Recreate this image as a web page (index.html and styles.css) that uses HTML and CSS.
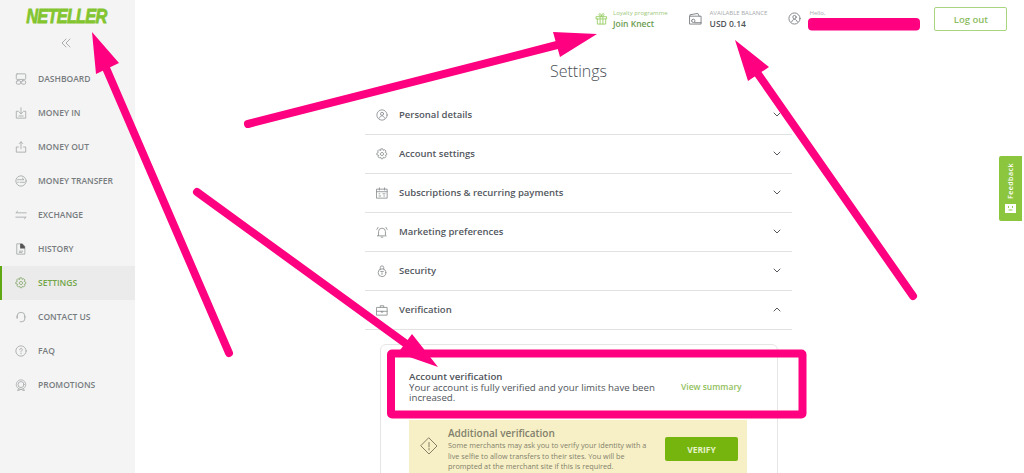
FILE: index.html
```html
<!DOCTYPE html>
<html lang="en">
<head>
  <meta charset="UTF-8">
  <title>Settings</title>
  <link rel="stylesheet" href="styles.css">
</head>
<body>
  <div class="page">

    <!-- Sidebar -->
    <aside class="sidebar">
      <div class="logo"><span class="logo-text">NETELLER</span></div>
      <div class="collapse">
        <svg width="10" height="10" viewBox="0 0 10 10"><path d="M5 1 1 5l4 4M9 1 5 5l4 4"/></svg>
      </div>
      <nav class="nav">
        <a class="nav-item"><svg class="nav-icon" viewBox="0 0 14 14"><rect x="1.500" y="1" width="11" height="6.500" rx="1"/><rect x="1.500" y="9" width="5" height="4" rx="1.500"/><rect x="7.500" y="9" width="5" height="4" rx="1.500"/></svg>DASHBOARD</a>
        <a class="nav-item"><svg class="nav-icon" viewBox="0 0 14 14"><path d="M4 5H1.500v8h11V5H10M7 1v7M5 6l2 2 2-2M4.500 10.500h5"/></svg>MONEY IN</a>
        <a class="nav-item"><svg class="nav-icon" viewBox="0 0 14 14"><path d="M4 7H1.500v6h11V7H10M7 9V1M5 3l2-2 2 2"/></svg>MONEY OUT</a>
        <a class="nav-item"><svg class="nav-icon" viewBox="0 0 14 14"><circle cx="7" cy="7" r="6"/><path d="M3 5.500h7.500L8.500 3.500M11 8.500H6M3 8.500h1"/></svg>MONEY TRANSFER</a>
        <a class="nav-item"><svg class="nav-icon" viewBox="0 0 14 14"><path d="M13 4.500H1l2-2M1 9.500h12l-2 2"/></svg>EXCHANGE</a>
        <a class="nav-item"><svg class="nav-icon" viewBox="0 0 14 14"><path d="M2.500 1h6l3 3v9h-9zM5 9.500h4M5 11h3"/><path class="fill" d="M6 1h2.500l3 3v2.500H6z"/></svg>HISTORY</a>
        <a class="nav-item active"><svg class="nav-icon" viewBox="0 0 14 14"><path d="M6 1h2l.5 1.800 1.700-.8 1.400 1.400-.8 1.700 1.700.9v2l-1.700.5.8 1.700-1.400 1.400-1.700-.8-.5 1.700H6l-.5-1.700-1.700.8-1.400-1.400.8-1.700L1 8V6l1.700-.9-.8-1.700L3.300 2l1.700.8z"/><path d="M5 6.500a2.200 2.200 0 0 1 4 0M9 7.500a2.200 2.200 0 0 1-4 0"/></svg>SETTINGS</a>
        <a class="nav-item"><svg class="nav-icon" viewBox="0 0 14 14"><path d="M2.500 8V6a4.500 4.500 0 0 1 9 0v2M2.500 5.500v3M11.500 6v3a3.500 3.500 0 0 1-3.500 3.500H6"/></svg>CONTACT US</a>
        <a class="nav-item"><svg class="nav-icon" viewBox="0 0 14 14"><circle cx="7" cy="7" r="6"/><path d="M5.500 5.500a1.500 1.500 0 1 1 2.200 1.300C7 7.200 7 7.500 7 8.200M7 9.800v.4"/></svg>FAQ</a>
        <a class="nav-item"><svg class="nav-icon" viewBox="0 0 14 14"><path d="M4 11.500l-1 2 2-.5 2-1 2 1 2 .5-1-2"/><circle cx="7" cy="6.500" r="3.500"/><circle class="dots" cx="7" cy="6.500" r="5.500"/></svg>PROMOTIONS</a>
      </nav>
    </aside>

    <div class="main">

      <!-- Top bar -->
      <header class="topbar">
        <div class="top-item loyalty">
          <svg class="top-icon green" viewBox="0 0 14 14"><path d="M1.500 5h11v2.500h-11zM2.500 7.500V13h9V7.500M5.500 5v8M8.500 5v8M7 4.500C4.500 4.500 4 3 4.500 2S6.500 1.500 7 4.500c.5-3 2-3.500 2.500-2.500S9.500 4.500 7 4.500z"/></svg>
          <div>
            <div class="top-label green-text">Loyalty programme</div>
            <div class="top-value green-dark">Join Knect</div>
          </div>
        </div>
        <div class="top-item">
          <svg class="top-icon" viewBox="0 0 14 14"><path d="M1 4.500h12V13H1zM1 4.500V3l8.500-1.500L11 4.500M2.800 9.500a1.800 1.800 0 1 0 3.600 0 1.800 1.800 0 1 0-3.600 0M6 11.500h7"/></svg>
          <div>
            <div class="top-label">AVAILABLE BALANCE</div>
            <div class="top-value">USD 0.14</div>
          </div>
        </div>
        <div class="top-item hello">
          <svg class="top-icon" viewBox="0 0 14 14"><circle cx="7" cy="7" r="6"/><circle cx="7" cy="5.500" r="1.800"/><path d="M4 10.500c.5-1.800 1.800-2.500 3-2.500s2.500.7 3 2.500"/></svg>
          <div class="top-label">Hello,</div>
        </div>
        <button class="logout">Log out</button>
      </header>

      <h1 class="page-title">Settings</h1>

      <!-- Settings list -->
      <section class="settings">
        <div class="row">
          <svg class="row-icon" viewBox="0 0 14 14"><circle cx="7" cy="7" r="6"/><circle cx="7" cy="5.600" r="1.800"/><path d="M4 10.500c.5-1.800 1.800-2.500 3-2.500s2.500.7 3 2.500"/></svg>
          <span class="row-text">Personal details</span>
          <svg class="chev" viewBox="0 0 8 5"><path d="M1 1l3 3 3-3"/></svg>
        </div>
        <div class="row">
          <svg class="row-icon" viewBox="0 0 14 14"><path d="M6 1h2l.5 1.800 1.700-.8 1.400 1.400-.8 1.700 1.700.9v2l-1.700.5.8 1.700-1.400 1.400-1.700-.8-.5 1.700H6l-.5-1.700-1.700.8-1.400-1.400.8-1.700L1 8V6l1.700-.9-.8-1.700L3.300 2l1.700.8z"/><path d="M5 6.500a2.200 2.200 0 0 1 4 0M9 7.500a2.200 2.200 0 0 1-4 0"/></svg>
          <span class="row-text">Account settings</span>
          <svg class="chev" viewBox="0 0 8 5"><path d="M1 1l3 3 3-3"/></svg>
        </div>
        <div class="row">
          <svg class="row-icon" viewBox="0 0 14 14"><path d="M1 2.500h12v10.500H1zM1 5.500h12M4 1v2.500M10 1v2.500M3.500 10.500h2M8 8h2.500M3.500 8h1M9 10.500h1"/></svg>
          <span class="row-text">Subscriptions &amp; recurring payments</span>
          <svg class="chev" viewBox="0 0 8 5"><path d="M1 1l3 3 3-3"/></svg>
        </div>
        <div class="row">
          <svg class="row-icon" viewBox="0 0 14 14"><path d="M3 10.500V6.500a4 4 0 0 1 8 0v4l1 1H2zM6 13h2M1 4l1.500-2.500M13 4l-1.500-2.500"/></svg>
          <span class="row-text">Marketing preferences</span>
          <svg class="chev" viewBox="0 0 8 5"><path d="M1 1l3 3 3-3"/></svg>
        </div>
        <div class="row">
          <svg class="row-icon" viewBox="0 0 14 14"><circle cx="7" cy="9" r="4.500"/><path d="M5 5V3a2 2 0 0 1 4 0v2M5.500 7.500h3M7 9v2"/></svg>
          <span class="row-text">Security</span>
          <svg class="chev" viewBox="0 0 8 5"><path d="M1 1l3 3 3-3"/></svg>
        </div>
        <div class="row">
          <svg class="row-icon" viewBox="0 0 14 14"><path d="M1 4h12v9H1zM5 4V2h4v2M1 8.500h12M6 8.500v1h2v-1"/></svg>
          <span class="row-text">Verification</span>
          <svg class="chev" viewBox="0 0 8 5"><path d="M1 4l3-3 3 3"/></svg>
        </div>

        <!-- Verification card -->
        <div class="card">
          <div class="verified">
            <div class="verified-text">
              <div class="verified-title">Account verification</div>
              <div class="verified-desc">Your account is fully verified and your limits have been increased.</div>
            </div>
            <a class="summary">View summary</a>
          </div>
          <div class="notice">
            <svg class="notice-icon" viewBox="0 0 18 18"><path d="M9 1l8 8-8 8-8-8zM9 5.500v4.500M9 11.500v1.500"/></svg>
            <div class="notice-body">
              <div class="notice-title">Additional verification</div>
              <div class="notice-text">Some merchants may ask you to verify your identity with a live selfie to allow transfers to their sites. You will be prompted at the merchant site if this is required.</div>
            </div>
            <button class="verify">VERIFY</button>
          </div>
        </div>
      </section>
    </div>
  </div>

  <!-- Feedback tab -->
  <div class="feedback">
    <span class="feedback-text">Feedback</span>
    <svg class="feedback-icon" viewBox="0 0 11 9"><path d="M0 0h11v9H0z"/><path class="mouth" d="M3.500 2.500v1M7.500 2.500v1M4 6h3"/></svg>
  </div>

  <!-- Annotations drawn over the screenshot -->
  <svg class="marks" width="1024" height="473" viewBox="0 0 1024 473">
    <rect class="mark-box" x="391" y="353.500" width="411.500" height="61" rx="1"/>
    <path class="mark-line" d="M229 353 106 68M248 124 557 45M913 296 758 74M197 192 405 343"/>
    <path class="mark-head" d="M92 32 96 74 119 63zM597 34 553 32 560 57zM735 40 748 81 769 67zM438 367 412 334 398 353z"/>
    <rect class="mark-pill" x="808" y="18" width="112" height="12.500" rx="4"/>
  </svg>
</body>
</html>
```

FILE: styles.css
```css
/* Reset */
* {
  margin: 0;
  padding: 0;
  box-sizing: border-box;
}

html, body {
  height: 100%;
  overflow: hidden;
  background: #fff;
  font-family: 'Open Sans', sans-serif;
  color: #4a4f55;
}

svg {
  fill: none;
  stroke-linecap: round;
  stroke-linejoin: round;
}

.page {
  display: flex;
  height: 473px;
}

/* Sidebar */
.sidebar {
  width: 135px;
  flex: none;
  background: #f4f4f4;
}

.logo {
  display: flex;
  justify-content: center;
  height: 30px;
  padding: 3px 2px 0 0;
}

.logo-text {
  display: block;
  font-family: 'Liberation Sans', sans-serif;
  font-size: 21px;
  line-height: 25px;
  font-weight: 700;
  font-style: italic;
  letter-spacing: -1px;
  color: #83c52f;
  -webkit-text-stroke: 0.8px #83c52f;
  transform: scaleX(0.78);
}

.collapse {
  display: flex;
  justify-content: center;
  height: 32px;
  padding: 8px 3px 0 0;
}

.collapse svg {
  stroke: #a9adb0;
  stroke-width: 1;
}

.nav-item {
  display: flex;
  align-items: center;
  gap: 11px;
  height: 34px;
  padding: 0 0 1px 15px;
  font-size: 8.5px;
  font-weight: 600;
  color: #777c80;
}

.nav-icon {
  width: 12px;
  height: 12px;
  flex: none;
  stroke: #a5a8aa;
  stroke-width: 1;
}

.nav-icon .fill {
  fill: #555;
  stroke: none;
}

.nav-icon .dots {
  stroke-dasharray: 1.500 1;
}

.nav-item.active {
  background: #ebebeb;
  color: #72a548;
  box-shadow: inset 2px 0 0 #5fa814;
}

.nav-item.active .nav-icon {
  stroke: #86a86c;
}

/* Main column */
.main {
  flex: 1;
  min-width: 0;
}

.topbar {
  display: flex;
  align-items: flex-start;
  gap: 21px;
  height: 58px;
  padding: 7px 17px 0 460px;
}

.top-item {
  display: flex;
  flex: none;
  align-items: flex-start;
  gap: 8px;
  padding-top: 2px;
  white-space: nowrap;
}

.top-item.loyalty {
  gap: 5px;
}

.top-item.hello {
  width: 125px;
}

.top-icon {
  width: 13px;
  height: 13px;
  flex: none;
  margin-top: 3px;
  stroke: #7d8184;
  stroke-width: 1;
}

.top-icon.green {
  stroke: #9ccf6a;
}

.top-label {
  font-size: 6px;
  line-height: 8px;
  color: #a7aaad;
}

.green-text {
  color: #9cc77a;
}

.top-value {
  font-size: 8.5px;
  line-height: 13px;
  font-weight: 600;
  color: #50555a;
}

.green-dark {
  color: #6b9c50;
}

.logout {
  flex: none;
  width: 73px;
  height: 24px;
  margin-left: auto;
  border: 1px solid #a8d680;
  border-radius: 2px;
  background: #fff;
  font-family: inherit;
  font-size: 9.5px;
  font-weight: 600;
  color: #8dbb60;
}

.page-title {
  height: 38px;
  margin-right: 2px;
  text-align: center;
  font-size: 16px;
  line-height: 26px;
  font-weight: 300;
  color: #4a4f55;
}

/* Settings list */
.settings {
  width: 427px;
  margin-left: 230px;
}

.row {
  display: flex;
  align-items: center;
  height: 39px;
  padding: 0 11px 1px 11px;
  border-bottom: 1px solid #e2e2e2;
}

.row-icon {
  width: 12px;
  height: 12px;
  flex: none;
  stroke: #8a8d90;
  stroke-width: 1;
}

.row-text {
  flex: 1;
  margin-left: 11px;
  font-size: 9.5px;
  font-weight: 600;
  color: #53585e;
}

.chev {
  width: 8px;
  height: 5px;
  stroke: #55595d;
  stroke-width: 1;
}

/* Verification card */
.card {
  width: 398px;
  height: 140px;
  margin: 14px 0 0 15px;
  padding-top: 18px;
  border: 1px solid #e6e6e6;
  border-radius: 6px;
}

.verified {
  display: flex;
  align-items: center;
  height: 46px;
  margin-bottom: 11px;
  padding-left: 28px;
}

.verified-text {
  flex: none;
  width: 262px;
  font-size: 9.7px;
  color: #4f545a;
}

.verified-title {
  font-weight: 600;
  line-height: 13px;
}

.verified-desc {
  line-height: 10px;
}

.summary {
  margin-left: 10px;
  font-size: 8.5px;
  font-weight: 600;
  color: #92c060;
}

.notice {
  display: flex;
  align-items: flex-start;
  width: 338px;
  height: 60px;
  margin-left: 28px;
  padding: 6px 0 0 11px;
  background: #f7f0c6;
}

.notice-icon {
  width: 18px;
  height: 18px;
  flex: none;
  margin-top: 11px;
  stroke: #77705a;
  stroke-width: 0.9;
}

.notice-body {
  flex: none;
  width: 205px;
  margin-left: 10px;
}

.notice-title {
  font-size: 10px;
  line-height: 14px;
  font-weight: 600;
  color: #82806c;
}

.notice-text {
  font-size: 7.3px;
  line-height: 10.5px;
  color: #82806c;
}

.verify {
  flex: none;
  width: 73px;
  height: 24px;
  margin: 11px 0 0 12px;
  border: 0;
  border-radius: 2px;
  background: #76b50e;
  font-family: inherit;
  font-size: 8.5px;
  font-weight: 700;
  color: #e6f2c8;
}

/* Feedback tab */
.feedback {
  position: absolute;
  top: 156px;
  right: 2px;
  display: flex;
  flex-direction: column;
  align-items: center;
  justify-content: space-between;
  width: 23px;
  height: 65px;
  padding: 7px 0 8px;
  border-radius: 2px 0 0 2px;
  background: #8cc63f;
}

.feedback-text {
  writing-mode: vertical-rl;
  transform: rotate(180deg);
  font-size: 7px;
  font-weight: 600;
  letter-spacing: 0.5px;
  color: #fff;
}

.feedback-icon {
  width: 11px;
  height: 9px;
}

.feedback-icon path {
  fill: #fff;
}

.feedback-icon .mouth {
  fill: none;
  stroke: #8cc63f;
  stroke-width: 1;
}

/* Annotations */
.marks {
  position: absolute;
  top: 0;
  left: 0;
}

.mark-box,
.mark-line {
  stroke: #ff0080;
  stroke-width: 8;
}

.mark-head,
.mark-pill {
  fill: #ff0080;
}
```
